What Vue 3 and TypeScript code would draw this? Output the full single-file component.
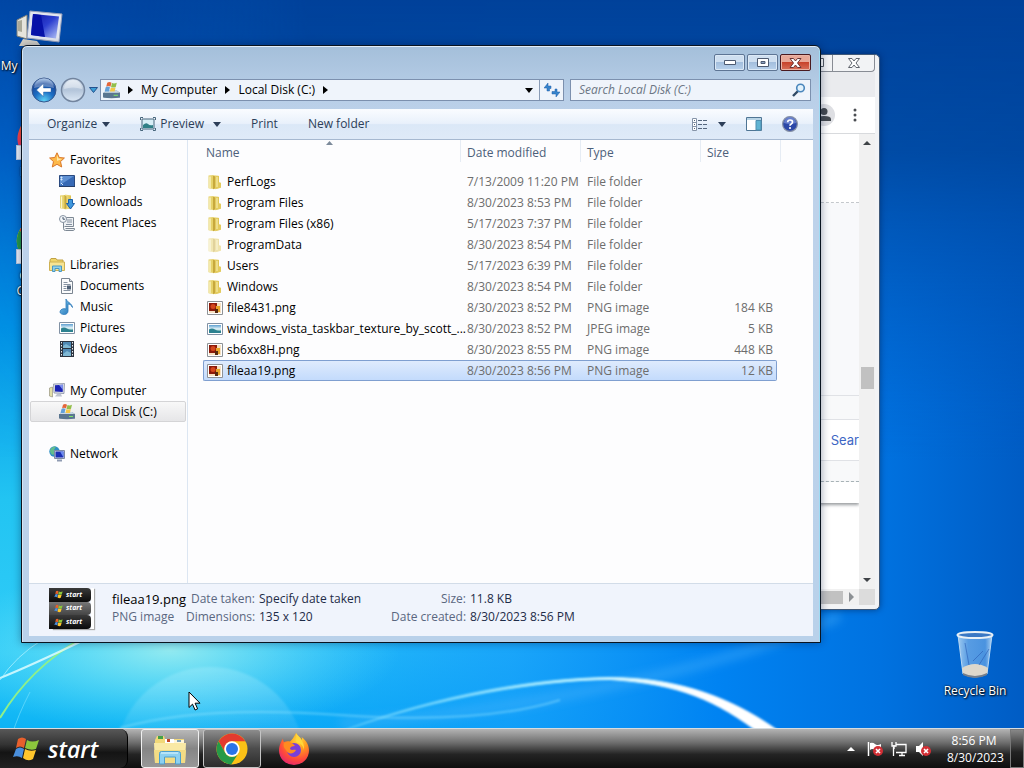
<script setup lang="ts">
import { ref } from 'vue'

interface NavItem {
  label: string
  icon: string
  child?: boolean
}
interface FileRow {
  name: string
  icon: string
  date: string
  type: string
  size: string
}

const groups: NavItem[][] = [
  [
    { label: 'Favorites', icon: 'star' },
    { label: 'Desktop', icon: 'desktop', child: true },
    { label: 'Downloads', icon: 'downloads', child: true },
    { label: 'Recent Places', icon: 'recent', child: true },
  ],
  [
    { label: 'Libraries', icon: 'libraries' },
    { label: 'Documents', icon: 'document', child: true },
    { label: 'Music', icon: 'music', child: true },
    { label: 'Pictures', icon: 'picture', child: true },
    { label: 'Videos', icon: 'video', child: true },
  ],
  [
    { label: 'My Computer', icon: 'computer' },
    { label: 'Local Disk (C:)', icon: 'disk', child: true },
  ],
  [{ label: 'Network', icon: 'network' }],
]

const files: FileRow[] = [
  { name: 'PerfLogs', icon: 'folder', date: '7/13/2009 11:20 PM', type: 'File folder', size: '' },
  { name: 'Program Files', icon: 'folder', date: '8/30/2023 8:53 PM', type: 'File folder', size: '' },
  { name: 'Program Files (x86)', icon: 'folder', date: '5/17/2023 7:37 PM', type: 'File folder', size: '' },
  { name: 'ProgramData', icon: 'folder', date: '8/30/2023 8:54 PM', type: 'File folder', size: '' },
  { name: 'Users', icon: 'folder', date: '5/17/2023 6:39 PM', type: 'File folder', size: '' },
  { name: 'Windows', icon: 'folder', date: '8/30/2023 8:54 PM', type: 'File folder', size: '' },
  { name: 'file8431.png', icon: 'png', date: '8/30/2023 8:52 PM', type: 'PNG image', size: '184 KB' },
  { name: 'windows_vista_taskbar_texture_by_scott_...', icon: 'picture', date: '8/30/2023 8:52 PM', type: 'JPEG image', size: '5 KB' },
  { name: 'sb6xx8H.png', icon: 'png', date: '8/30/2023 8:55 PM', type: 'PNG image', size: '448 KB' },
  { name: 'fileaa19.png', icon: 'png', date: '8/30/2023 8:56 PM', type: 'PNG image', size: '12 KB' },
]

const selectedNav = ref('Local Disk (C:)')
const selectedFile = ref('fileaa19.png')
const query = ref('')
</script>

<template>
  <svg class="defs" aria-hidden="true">
    <defs>
      <linearGradient id="gFolder" x1="0" x2="1"><stop offset="0" stop-color="#f4e590" /><stop offset="1" stop-color="#dcc04e" /></linearGradient>
      <linearGradient id="gScreen" x1="0" x2="1" y1="0" y2="1"><stop offset="0" stop-color="#0b12a0" /><stop offset=".5" stop-color="#2c3fd0" /><stop offset="1" stop-color="#b9c8f8" /></linearGradient>
      <linearGradient id="gSky" x1="0" x2="0" y1="0" y2="1"><stop offset="0" stop-color="#5d9fd0" /><stop offset=".5" stop-color="#e6f5fa" /><stop offset="1" stop-color="#2f8a80" /></linearGradient>
      <linearGradient id="gBlue" x1="0" x2="1" y1="0" y2="1"><stop offset="0" stop-color="#86cdf0" /><stop offset="1" stop-color="#1c6db4" /></linearGradient>
      <linearGradient id="gBin" x1="0" x2="1"><stop offset="0" stop-color="#c8e4f8" stop-opacity=".8" /><stop offset=".3" stop-color="#7db4ec" stop-opacity=".7" /><stop offset=".8" stop-color="#6aa8e8" stop-opacity=".7" /><stop offset="1" stop-color="#d0e8fa" stop-opacity=".85" /></linearGradient>
      <radialGradient id="gBack" cx=".5" cy=".95" r=".9"><stop offset="0" stop-color="#5fd3f6" /><stop offset=".45" stop-color="#1d6fc4" /><stop offset=".8" stop-color="#1a4a9c" /><stop offset="1" stop-color="#7fa6d8" /></radialGradient>
      <linearGradient id="gFwd" x1="0" x2="0" y1="0" y2="1"><stop offset="0" stop-color="#dfe8f2" /><stop offset=".5" stop-color="#b4c5da" /><stop offset="1" stop-color="#dce8f6" /></linearGradient>
      <radialGradient id="gFox" cx=".65" cy=".2" r=".9"><stop offset="0" stop-color="#ffe03c" /><stop offset=".35" stop-color="#ff9a1f" /><stop offset=".7" stop-color="#ff4a3a" /><stop offset="1" stop-color="#e0207a" /></radialGradient>

      <symbol id="flag" viewBox="0 0 28 26">
        <path d="M6 3q4-3 8 0l-2 9q-4-3-8 0z" fill="#e8602c" />
        <path d="M15 4q5 3 12 0l-3 9q-5 2-11-1z" fill="#8cc63c" />
        <path d="M4 13q4-3 8 0l-2 9q-4-3-9-1z" fill="#4a8fdc" />
        <path d="M13 13q5 3 11 1l-3 9q-5 3-10-1z" fill="#ffc62c" />
      </symbol>
      <symbol id="star" viewBox="0 0 16 16"><path d="M8 .8l2.200 4.700 5.200.5-3.900 3.600 1.200 5.400L8 12.300 3.300 15l1.200-5.400L.6 6l5.200-.5z" fill="#fdb94a" stroke="#d9772a" /><path d="M8 3l1.400 3.400L13 7 8 9z" fill="#ffe9a8" /></symbol>
      <symbol id="desktop" viewBox="0 0 16 16"><path d="M.5 2.500h15v11H.5z" fill="#3769b5" stroke="#2a4a80" /><path d="M1 3h14L1 12z" fill="#5f91d4" /><path d="M2 4h1v1H2zM2 6h1v1H2zM2 10l2 2" fill="#fff" stroke="#d5e8fa" /><path d="M0 13h16v1H0z" fill="#263e68" /></symbol>
      <symbol id="folder" viewBox="0 0 16 16"><path d="M1.500 1.500L6.500 1v14l-5-.8z" fill="#e6d26a" /><path d="M3 2.500v11.500" stroke="#fbf6cd" stroke-width="1.300" /><path d="M6.500 1L12 2v12l-5.500 1.200z" fill="url(#gFolder)" /><path d="M6 1.500v13.700l2.300-1V2.500z" fill="#c7a83c" /><path d="M8.300 2.500l3-.7V8l2.700.8v5L8.300 15.300z" fill="#e3cb5e" /><path d="M10 3v10" stroke="#f6ebaa" stroke-width="1.200" /></symbol>
      <symbol id="downloads" viewBox="0 0 16 16"><path d="M1 1.500L6 1v14l-5-.8z" fill="#e6d26a" /><path d="M2.500 2.500v11.500" stroke="#fbf6cd" stroke-width="1.300" /><path d="M6 .5l6 1v13l-6 1z" fill="url(#gFolder)" /><path d="M5.500 1v14.200l2-1V2.500z" fill="#c7a83c" /><path d="M9.500 5.500h4v4h2L11.500 15 7.500 9.500h2z" fill="#3f97dd" stroke="#1b5fa8" /></symbol>
      <symbol id="recent" viewBox="0 0 16 16"><path d="M5.500 2.500h9v9h-9M4.500 6v7.500q0 2 2 2h8q1 0 1-2h-9" fill="#eef1f4" stroke="#7d8894" /><path d="M8 5h5M8 7h5M7 9.500h6" stroke="#8490a0" /><circle cx="4" cy="4" r="3.500" fill="#f4f7fa" stroke="#8793a2" /><path d="M4 2v2.200h2" fill="none" stroke="#44566c" /></symbol>
      <symbol id="libraries" viewBox="0 0 16 16"><path d="M1 3l1-1.500h5l1 1.500h6v4H1z" fill="#efd56a" stroke="#c1a245" /><path d="M.5 5h15v8.500H.5z" fill="#f7e493" stroke="#ceb152" /><path d="M3.500 14.500V9h9v5.500h-2.500V11.500H6v3z" fill="#8fd0ec" stroke="#4a98c2" /></symbol>
      <symbol id="document" viewBox="0 0 16 16"><path d="M2.500.5h8l3 3v12h-11z" fill="#fbfcfd" stroke="#7b8591" /><path d="M10.500.5v3h3" fill="#d5dce4" stroke="#7b8591" /><path d="M4.500 4.500h4M4.500 6.500h7M4.500 8.500h3M4.500 10.500h3M4.500 12.500h7" stroke="#8793a2" /><path d="M8 7.500h4v4H8z" fill="#4e6076" /></symbol>
      <symbol id="music" viewBox="0 0 16 16"><path d="M7 0c.5 3 5.500 3.500 6.500 8.500-1-2.500-3-3.500-4.500-3.500V12c0 2-1.500 3.500-3.700 3.500S1 14.500 1 13s1.500-3.300 4-3.300c1 0 1.500.2 2 .4z" fill="url(#gBlue)" stroke="#2a79ba" stroke-width=".8" /></symbol>
      <symbol id="picture" viewBox="0 0 16 16"><path d="M.5 2.500h15v11H.5z" fill="#fff" stroke="#8191a4" /><path d="M2 4h12v8H2z" fill="url(#gSky)" /><path d="M2 8.500q3-2 6 0t6 1V12H2z" fill="#2d8290" /></symbol>
      <symbol id="video" viewBox="0 0 16 16"><path d="M1 0h14v16H1z" fill="#2c3440" /><path d="M4 1h8v6H4zM4 8h8v7H4z" fill="#4f89b4" /><path d="M4 5l3-2 5 3v1H4zM4 13l4-3 4 2v3H4z" fill="#7fb8d4" /><path d="M2.500 1v15M13.500 1v15" stroke="#e8eef4" stroke-dasharray="1.500 1.500" /></symbol>
      <symbol id="computer" viewBox="0 0 16 16"><path d="M.5 5l3-1v10l-3-1z" fill="#e4e0a8" stroke="#96937f" stroke-width=".7" /><path d="M4.500 1l11-.5-.5 10-10-.5z" fill="#dadde6" stroke="#8990a4" stroke-width=".8" /><path d="M6 2.200l8-.4-.3 7.100-7.700-.3z" fill="#1a22b4" /><path d="M10 2l4-.2-.2 5z" fill="#7f92ee" /><path d="M8 11h4l1 2.500H6z" fill="#bec3cf" /></symbol>
      <symbol id="disk" viewBox="0 0 16 16"><path d="M1 10l2-2h10l3 2v4.500H1z" fill="#7d96ac" /><path d="M0 10h16v4.500q-8 1.500-16 0z" fill="#5a7690" /><path d="M1 10l2-2h10l2.500 2z" fill="#c9d8e4" /><path d="M10 12h4v1h-4z" fill="#7ce26a" /><path d="M4 .8q2-1.500 4 0L7 4.500q-2-1.500-4 0z" fill="#e4663a" /><path d="M8.500 1q2 1 4.500-.3L12 4.700q-2 1-4.500.2z" fill="#93bf4a" /><path d="M2.500 5q2-1.500 4 0L5.500 9h-4z" fill="#63a0d8" /><path d="M7.300 5.300q2 1 4.500-.2L11 9H6.500z" fill="#f4c748" /></symbol>
      <symbol id="network" viewBox="0 0 16 16"><circle cx="5.500" cy="5.500" r="5.200" fill="#2f8fc4" /><path d="M1 4q2-4 6-3.500L5 4 7 6 4 9Q1 8 1 4z" fill="#63bd8c" /><path d="M5.500 4.500h10v8h-10z" fill="#d8deea" stroke="#7e8aa4" /><path d="M6.500 5.500h8v6h-8z" fill="#1c2fb4" /><path d="M11 5.500h3.500v6z" fill="#6d8cf0" /><path d="M8 14.500h5" stroke="#8f9bb2" stroke-width="2" /></symbol>
      <symbol id="png" viewBox="0 0 16 16"><path d="M.5 1.500h15v13H.5z" fill="#fff" stroke="#8e9296" /><path d="M2 3h12v10H2z" fill="#f6e0c0" /><path d="M2 3h8v8H2z" fill="#8c1a0a" /><circle cx="6" cy="6.500" r="2.500" fill="#d4471d" /><path d="M9 6h4v6H9z" fill="#e8a52a" /><path d="M8 9h3v4H8z" fill="#54280f" /></symbol>
      <symbol id="chrome" viewBox="0 0 32 32"><circle cx="16" cy="16" r="15.500" fill="#fbc116" /><path d="M2.600 8.300A15.500 15.500 0 0 1 29.400 8.300H16a7.700 7.700 0 0 0-6.700 11.600z" fill="#e33b2e" /><path d="M2.600 8.300A15.500 15.500 0 0 0 15.200 31.500L22.700 19.900a7.700 7.700 0 0 1-13.400 0z" fill="#269a48" /><circle cx="16" cy="16" r="7.700" fill="#fff" /><circle cx="16" cy="16" r="6" fill="#2a74e8" /></symbol>
      <symbol id="firefox" viewBox="0 0 32 32"><path d="M18 0c2 3 4 4 6 7 0-1 0-2-.4-3C29 8 31 13 31 17.500A15 14.500 0 0 1 1 17.500C1 12 4 7 5 5.500c0 2 .5 3 1 3.500C8 8 10 8 12 8.500 14 7 16 4 18 0z" fill="url(#gFox)" /><circle cx="16" cy="17" r="7" fill="#7a3fd8" /><path d="M6 10c4-2 8-1 11 3-3 0-5 1-5 3 2 2 4 0 6 1-2 4-8 5-10 0-2-2-3-4-2-7z" fill="#ff8b20" /><path d="M18 0c2 4 9 8 8 17-1-5-4-7-8-8 1-3 0-6 0-9z" fill="#ffd83a" /></symbol>
      <symbol id="explorer" viewBox="0 0 34 32"><path d="M2 7l2-4h7l1 3h19v20H2z" fill="#f1d878" /><path d="M5 3h5v3H5z" fill="#44a046" /><path d="M12 6h9v4h-9z" fill="#fff" /><path d="M14 6h3v3h-3z" fill="#c54724" /><path d="M21 7h10v4H21z" fill="#fff6d8" /><path d="M24 7h4v2h-4z" fill="#7aa0b8" /><path d="M1 10h32l-1 20H2z" fill="#f9e9a5" /><path d="M1 17h32l-1 13H2z" fill="#f3dc84" /><path d="M6.500 31V20.500q0-2 2-2h17q2 0 2 2V31h-5v-7h-11v7z" fill="#8dd0f0" stroke="#4b9fcf" /><path d="M8 20h17" stroke="#e2f7ff" /></symbol>
      <symbol id="badge" viewBox="0 0 10 10"><circle cx="5" cy="5" r="5" fill="#d22f35" /><path d="M3 3l4 4M7 3L3 7" stroke="#fff" stroke-width="1.600" /></symbol>
    </defs>
  </svg>

  <main class="screen">
    <svg class="wallpaper" viewBox="0 0 1024 768" preserveAspectRatio="none" aria-hidden="true">
      <defs>
        <linearGradient id="wBase" x1="0" y1="0" x2="0" y2="1"><stop offset="0" stop-color="#0048a8" /><stop offset=".2" stop-color="#0064cc" /><stop offset=".42" stop-color="#0094e8" /><stop offset=".65" stop-color="#22c4f2" /><stop offset=".85" stop-color="#30ccf8" /><stop offset=".96" stop-color="#08b0f4" /></linearGradient>
        <linearGradient id="wRight" x1="0" x2="1" y1="0" y2="0"><stop offset=".15" stop-color="#0090fa" stop-opacity="0" /><stop offset=".5" stop-color="#1298fa" stop-opacity=".75" /><stop offset=".7" stop-color="#0083f2" /><stop offset=".86" stop-color="#0072e0" /><stop offset="1" stop-color="#005cc4" /></linearGradient>
        <linearGradient id="wTop" x1="0" x2="0" y1="0" y2="1"><stop offset="0" stop-color="#00419a" /><stop offset=".2" stop-color="#00459c" stop-opacity=".85" /><stop offset=".6" stop-color="#005cc8" stop-opacity="0" /></linearGradient>
        <linearGradient id="wFade" x1="0" x2="1"><stop offset="0" stop-color="#333" /><stop offset=".3" stop-color="#fff" /></linearGradient>
        <mask id="wMask"><path d="M0 0h1024v768H0z" fill="url(#wFade)" /></mask>
        <radialGradient id="wGlow"><stop offset="0" stop-color="#98ecf0" stop-opacity=".95" /><stop offset="1" stop-color="#5adcf8" stop-opacity="0" /></radialGradient>
        <linearGradient id="wOrb" x1="0" x2="0" y1="0" y2="1"><stop offset="0" stop-color="#c8f6ff" stop-opacity=".24" /><stop offset=".5" stop-color="#fff" stop-opacity="0" /></linearGradient>
        <linearGradient id="wArc" x1="0" x2="1"><stop offset="0" stop-color="#7adcff" stop-opacity=".5" /><stop offset=".5" stop-color="#b4f0ff" /><stop offset=".8" stop-color="#fff" /></linearGradient>
        <filter id="soft"><feGaussianBlur stdDeviation="1" /></filter>
        <filter id="softer"><feGaussianBlur stdDeviation="5" /></filter>
      </defs>
      <path d="M0 0h1024v768H0z" fill="url(#wBase)" />
      <path d="M0 0h1024v768H0z" fill="url(#wRight)" />
      <path d="M0 0h1024v768H0z" fill="url(#wTop)" mask="url(#wMask)" />
      <ellipse cx="170" cy="650" rx="230" ry="85" fill="url(#wGlow)" />
      <circle cx="210" cy="762" r="95" fill="url(#wOrb)" filter="url(#soft)" />
      <path d="M340 724Q480 715 620 684T840 616" fill="none" stroke="#57b8fc" stroke-width="10" opacity=".35" filter="url(#softer)" />
      <path d="M120 728Q200 705 340 715T560 700" fill="none" stroke="#a4ecff" stroke-width="2" opacity=".4" filter="url(#soft)" />
      <path d="M345 730C440 694 540 678 610 677.500C680 678 734 698 784 735L762 735C716 700 680 684 610 679.500C540 680 440 697 345 730z" fill="url(#wArc)" stroke="url(#wArc)" stroke-width="1" filter="url(#soft)" />
      <path d="M0 718Q30 668 82 638" fill="none" stroke="#8ff08a" stroke-width="2" />
      <path d="M0 678Q30 666 84 640" fill="none" stroke="#e8ffff" stroke-width="2" opacity=".8" />
      <path d="M0 680Q16 656 42 640" fill="none" stroke="#b8f4ff" opacity=".7" />
      <path d="M12 735Q18 715 30 692" fill="none" stroke="#8eeaff" opacity=".5" />
    </svg>

    <section class="icons" aria-label="Desktop icons">
      <button class="desk pc">
        <svg viewBox="0 0 48 36" width="48" height="36"><path d="M2 10l10-5v24l-10-3z" fill="#e6e4dc" stroke="#7f8078" /><path d="M3 11l4-1v12l-4-1z" fill="#a9a898" /><path d="M15 1l32 3-3 28-32-4z" fill="#e2e6f0" stroke="#98a2bc" /><path d="M18 4l26 2.500-3 22-25-3.500z" fill="url(#gScreen)" /><path d="M18 4l8 1 4 22-14-2z" fill="#0612a8" /><path d="M8 29l14 2 4 5H4z" fill="#d5d2c8" /></svg>
        <span>My Computer</span>
      </button>
      <button class="desk">
        <svg width="46" height="46" viewBox="0 0 32 32"><use href="#firefox" /></svg>
        <i class="shortcut"></i>
        <span>Firefox</span>
      </button>
      <button class="desk">
        <svg width="46" height="46" viewBox="0 0 32 32"><use href="#chrome" /></svg>
        <i class="shortcut"></i>
        <span>Google<br />Chrome</span>
      </button>
    </section>

    <button class="desk bin">
      <svg width="40" height="48" viewBox="0 0 40 48"><path d="M3 4l5 39q12 6 24 0l5-39z" fill="url(#gBin)" stroke="#b8d8f4" /><path d="M7 37q13-8 26 0l-1 6q-12 6-24 0z" fill="#ddd8cc" /><path d="M8 42q12 6 24 0v2q-12 6-24 0z" fill="#737e8c" /><ellipse cx="20" cy="4" rx="17.500" ry="3" fill="#3a78c4" stroke="#e8f0f6" stroke-width="2" /><path d="M10 12l4 22M18 30l10-10M24 34l10-16" stroke="#2a5cb4" fill="none" opacity=".6" /></svg>
      <span>Recycle Bin</span>
    </button>

    <section class="browser" aria-label="Browser window">
      <div class="btitle">
        <button aria-label="Restore browser"><svg width="12" height="12" viewBox="0 0 12 12"><path d="M1.500 1.500h9v8h-9zM4.500 4.500h3v2h-3z" fill="#fff" stroke="#555b64" /></svg></button>
        <button class="bclose" aria-label="Close browser"><svg width="12" height="10" viewBox="0 0 12 10"><path d="M.5.500h3.500L6 3 8 .5h3.500L8 5l3.500 4.500H8L6 7 4 9.500H.5L4 5z" fill="#fff" stroke="#60656d" /></svg></button>
      </div>
      <div class="btabs"></div>
      <div class="btools">
        <span class="avatar"><svg width="22" height="22" viewBox="0 0 22 22"><circle cx="11" cy="11" r="11" fill="#dedfe3" /><circle cx="11" cy="7.500" r="3.500" fill="#454a50" /><path d="M4 17v-2q0-3 7-3t7 3v2z" fill="#454a50" /></svg></span>
        <button aria-label="Browser menu"><svg width="4" height="14" viewBox="0 0 4 14"><circle cx="2" cy="2" r="1.500" /><circle cx="2" cy="7" r="1.500" /><circle cx="2" cy="12" r="1.500" /></svg></button>
      </div>
      <div class="bbody">
        <div class="bpage">
          <div class="blank top"></div>
          <div class="blank panel"></div>
          <div class="blank strip"></div>
          <div class="linkrow"><a href="#search">Sear</a></div>
          <div class="blank strip2"></div>
          <div class="blank card"></div>
        </div>
        <div class="vscroll">
          <svg width="10" height="6" viewBox="0 0 10 6"><path d="M1 5h8L5 1z" fill="#3f4347" /></svg>
          <i></i>
          <svg width="10" height="6" viewBox="0 0 10 6"><path d="M1 1h8L5 5z" fill="#3f4347" /></svg>
        </div>
      </div>
      <div class="hscroll"><i></i><svg width="16" height="10" viewBox="0 0 16 10"><path d="M6 0v10l5-5z" fill="#8c9094" /></svg><b></b></div>
    </section>

    <section class="window" aria-label="Local Disk (C:)">
      <header class="title">
        <button aria-label="Minimize"><svg width="12" height="6" viewBox="0 0 12 6"><path d="M.5.500h11v4H.5z" fill="#fff" stroke="#4d5a70" /></svg></button>
        <button aria-label="Maximize"><svg width="12" height="10" viewBox="0 0 12 10"><path d="M.5.500h11v8H.5z" fill="#fff" stroke="#4d5a70" /><path d="M4 3.500h4v2H4z" fill="#8ba2c4" stroke="#4d5a70" /></svg></button>
        <button class="close" aria-label="Close"><svg width="13" height="10" viewBox="0 0 13 10"><path d="M1 .5h3.500l2 2.500 2-2.500H12L8.500 5 12 9.500H8.500l-2-2.500-2 2.500H1L4.500 5z" fill="#fff" stroke="#6a3535" /></svg></button>
      </header>

      <nav class="address">
        <div class="history">
          <button aria-label="Back"><svg width="26" height="26" viewBox="0 0 26 26"><circle cx="13" cy="13" r="12" fill="url(#gBack)" stroke="#36578e" /><path d="M3 11a10 10 0 0 1 20 0q-10-3-20 0z" fill="#fff" opacity=".3" /><path d="M5.500 13l7-6.500v4.500H20v4h-7.500v4.500z" fill="#fff" stroke="#24589c" stroke-width=".4" /></svg></button>
          <button aria-label="Forward"><svg width="26" height="26" viewBox="0 0 26 26"><circle cx="13" cy="13" r="11.500" fill="url(#gFwd)" stroke="#72849e" stroke-width="1.500" /><path d="M4 12a9 9 0 0 1 18 0q-9-3-18 0z" fill="#fff" opacity=".35" /></svg></button>
          <button class="recent" aria-label="Recent locations"><svg width="9" height="6" viewBox="0 0 9 6"><path d="M.5.500h8l-4 5z" fill="#3b9ed6" stroke="#24508c" /></svg></button>
        </div>
        <div class="crumbs">
          <svg width="17" height="17"><use href="#disk" /></svg>
          <svg class="tri" width="5" height="8" viewBox="0 0 5 8"><path d="M0 0v8l5-4z" /></svg>
          <a href="#computer">My Computer</a>
          <svg class="tri" width="5" height="8" viewBox="0 0 5 8"><path d="M0 0v8l5-4z" /></svg>
          <a href="#disk-c">Local Disk (C:)</a>
          <svg class="tri" width="5" height="8" viewBox="0 0 5 8"><path d="M0 0v8l5-4z" /></svg>
          <button class="drop" aria-label="Previous locations"><svg width="8" height="5" viewBox="0 0 8 5"><path d="M0 0h8L4 5z" /></svg></button>
          <button class="refresh" aria-label="Refresh"><svg width="16" height="14" viewBox="0 0 16 14"><path d="M0 5l4-5v3h3v2.500H5.500V8H3V5z" fill="#3684cc" stroke="#1e5fa8" stroke-width=".5" /><path d="M16 9l-4 5v-3H8V8.500h3V6h2v3z" fill="#3684cc" stroke="#1e5fa8" stroke-width=".5" /></svg></button>
        </div>
        <div class="search">
          <input v-model="query" type="text" aria-label="Search Local Disk (C:)" placeholder="Search Local Disk (C:)" />
          <svg width="14" height="14" viewBox="0 0 14 14"><path d="M1 13l5-5" stroke="#2f4864" stroke-width="2.400" /><circle cx="8.500" cy="5" r="3.800" fill="#e2f2fc" stroke="#4a86bc" stroke-width="1.600" /></svg>
        </div>
      </nav>

      <div class="client">
        <div class="toolbar">
          <button>Organize <svg width="8" height="5" viewBox="0 0 8 5"><path d="M0 0h8L4 5z" /></svg></button>
          <button class="preview"><svg width="16" height="14" viewBox="0 0 16 14"><path d="M2 2h12v10H2z" fill="#d8eef6" stroke="#49677c" /><path d="M3 8q3-3 5-1t5 1v3H3z" fill="#2f7f86" /><path d="M.5 3V.5H3M13 .5h2.500V3M15.500 11v2.500H13M3 13.500H.5V11" fill="none" stroke="#49677c" /></svg>Preview <svg class="far" width="8" height="5" viewBox="0 0 8 5"><path d="M0 0h8L4 5z" /></svg></button>
          <button>Print</button>
          <button>New folder</button>
          <span class="grow"></span>
          <button class="views" aria-label="Change your view"><svg width="16" height="13" viewBox="0 0 16 13"><path d="M.5.500h4v12h-4zM.5 4.500h4M.5 8.500h4" fill="#fff" stroke="#8694a8" /><path d="M6 2.500h4M11 2.500h4M6 6.500h4M11 6.500h4M6 10.500h4M11 10.500h4" stroke="#54657c" /><path d="M2 2h1v1H2zM2 6h1v1H2zM2 10h1v1H2z" fill="#54657c" /></svg><svg width="8" height="5" viewBox="0 0 8 5"><path d="M0 0h8L4 5z" /></svg></button>
          <button class="pane" aria-label="Show the preview pane"><svg width="16" height="14" viewBox="0 0 16 14"><path d="M.5.500h15v13H.5z" fill="#fff" stroke="#4f7594" /><path d="M1 1h14v2H1z" fill="#b8d4e6" /><path d="M10 3.500h5V13h-5z" fill="#62b4d2" stroke="#4f8fb0" /></svg></button>
          <button class="help" aria-label="Help"><svg width="16" height="16" viewBox="0 0 16 16"><circle cx="8" cy="8" r="7.400" fill="#2c48a8" stroke="#8791a6" stroke-width="1.200" /><path d="M2 7a6 6 0 0 1 12 0q-6 2-12 0z" fill="#8ea4e4" opacity=".6" /><path d="M5.700 6.300q0-2.300 2.400-2.300t2.400 2q0 1.200-1.300 1.900Q8 8.500 8 9.700" fill="none" stroke="#fff" stroke-width="1.700" /><circle cx="8" cy="12" r="1.100" fill="#fff" /></svg></button>
        </div>

        <div class="panes">
          <aside class="side">
            <ul v-for="(group, i) in groups" :key="i">
              <li v-for="item in group" :key="item.label">
                <button :class="{ child: item.child, active: item.label === selectedNav }" @click="selectedNav = item.label">
                  <svg width="16" height="16"><use :href="'#' + item.icon" /></svg>{{ item.label }}
                </button>
              </li>
            </ul>
          </aside>
          <div class="list">
            <table>
              <colgroup><col class="cname" /><col class="cdate" /><col class="ctype" /><col class="csize" /></colgroup>
              <thead>
                <tr>
                  <th scope="col">Name<svg class="sort" width="7" height="4" viewBox="0 0 7 4"><path d="M0 4h7L3.500 0z" fill="#7c8a9a" /></svg></th>
                  <th scope="col">Date modified</th>
                  <th scope="col">Type</th>
                  <th scope="col">Size</th>
                </tr>
              </thead>
              <tbody>
                <tr v-for="f in files" :key="f.name" :class="{ selected: f.name === selectedFile }" @click="selectedFile = f.name">
                  <td><span class="file" :class="{ faded: f.name === 'ProgramData' }"><svg width="16" height="16"><use :href="'#' + f.icon" /></svg>{{ f.name }}</span></td>
                  <td>{{ f.date }}</td>
                  <td>{{ f.type }}</td>
                  <td>{{ f.size }}</td>
                </tr>
              </tbody>
            </table>
          </div>
        </div>

        <footer class="details">
          <div class="thumb">
            <span v-for="n in 3" :key="n" :class="{ mid: n === 2 }"><svg width="9" height="9"><use href="#flag" /></svg>start</span>
          </div>
          <div class="what"><strong>fileaa19.png</strong><span>PNG image</span></div>
          <dl class="first">
            <dt>Date taken:</dt><dd>Specify date taken</dd>
            <dt>Dimensions:</dt><dd>135 x 120</dd>
          </dl>
          <dl>
            <dt>Size:</dt><dd>11.8 KB</dd>
            <dt>Date created:</dt><dd>8/30/2023 8:56 PM</dd>
          </dl>
        </footer>
      </div>
    </section>

    <footer class="taskbar">
      <button class="start"><svg width="28" height="26"><use href="#flag" /></svg>start</button>
      <button class="task open current" aria-label="Windows Explorer"><svg width="34" height="32"><use href="#explorer" /></svg></button>
      <button class="task open" aria-label="Google Chrome"><svg width="32" height="32"><use href="#chrome" /></svg></button>
      <button class="task" aria-label="Firefox"><svg width="32" height="32"><use href="#firefox" /></svg></button>
      <div class="tray">
        <button aria-label="Show hidden icons"><svg width="8" height="4" viewBox="0 0 8 4"><path d="M0 4h8L4 0z" fill="#fff" /></svg></button>
        <button aria-label="Action Center"><svg width="16" height="16" viewBox="0 0 16 16"><path d="M1.500 1v14" stroke="#fff" stroke-width="1.500" /><path d="M3 2q3-1 5 1t6 0v6q-3 2-6 0t-5 0z" fill="#fff" /><use href="#badge" x="6" y="5" width="10" height="10" /></svg></button>
        <button aria-label="Network"><svg width="16" height="16" viewBox="0 0 16 16"><path d="M5 3.500h10v8H5M8 14.500h6M11 12v2M2.500 6v9" fill="none" stroke="#fff" stroke-width="1.300" /><path d="M1 1v4h4V1M3 4v4" fill="none" stroke="#fff" stroke-width="1.300" /></svg></button>
        <button aria-label="Volume muted"><svg width="16" height="16" viewBox="0 0 16 16"><path d="M1 5h3l4-4v14l-4-4H1z" fill="#fff" /><use href="#badge" x="6" y="5" width="10" height="10" /></svg></button>
      </div>
      <time class="clock"><span>8:56 PM</span><span>8/30/2023</span></time>
      <button class="peek" aria-label="Show desktop"></button>
    </footer>

    <svg class="pointer" width="14" height="20" viewBox="0 0 14 20" aria-hidden="true"><path d="M1 1v15.500l3.500-3.300 2.600 5.800 2.500-1.200L7.100 12.200H12z" fill="#fff" stroke="#000" /></svg>
  </main>
</template>

<style>
html,
body,
#app {
  height: 100%;
}
body {
  margin: 0;
  overflow: hidden;
}
</style>

<style scoped>
.defs {
  position: absolute;
  width: 0;
  height: 0;
}
.screen {
  position: relative;
  height: 100%;
  overflow: hidden;
  font-family: 'Open Sans', 'Noto Sans', sans-serif;
  font-size: 12px;
  line-height: 18px;
  color: #000;
  display: flex;
  flex-direction: column;
  justify-content: space-between;
}
.screen * {
  box-sizing: border-box;
}
svg {
  display: block;
  flex: none;
}
button {
  font: inherit;
  color: inherit;
  background: none;
  border: 0;
  padding: 0;
  margin: 0;
}
a {
  color: inherit;
  text-decoration: none;
}
.wallpaper {
  position: absolute;
  inset: 0;
  width: 100%;
  height: 100%;
}

/* desktop icons */
.icons {
  position: relative;
  display: flex;
  flex-direction: column;
  width: 78px;
  padding-top: 10px;
}
.desk {
  position: relative;
  display: flex;
  flex-direction: column;
  align-items: center;
  gap: 4px;
  height: 104px;
  color: #fff;
  line-height: 15px;
  white-space: nowrap;
  text-shadow: 1px 1px 2px #000, 0 0 2px #000;
}
.desk.pc {
  gap: 12px;
}
.shortcut {
  position: absolute;
  left: 16px;
  top: 31px;
  width: 15px;
  height: 15px;
  background: #e8eef8;
  border: 1px solid #b4c4dc;
}
.desk.bin {
  position: absolute;
  right: 11px;
  bottom: 62px;
  width: 76px;
  height: 75px;
}

/* browser window behind */
.browser {
  position: absolute;
  top: 54px;
  right: 144px;
  bottom: 158px;
  left: 600px;
  display: flex;
  flex-direction: column;
  padding: 0 4px 4px;
  background: #f2f3f5;
  border: 1px solid #3e5878;
  border-radius: 5px;
  box-shadow: 0 0 6px rgb(0 20 60 / 50%);
}
.btitle {
  display: flex;
  justify-content: flex-end;
  height: 17px;
}
.btitle button {
  display: grid;
  place-items: center;
  width: 29px;
  border: 1px solid #888c94;
  border-top: 0;
}
.btitle .bclose {
  width: 42px;
  border-left: 0;
  border-radius: 0 0 4px 0;
}
.btabs {
  height: 25px;
  background: #eaebee;
}
.btools {
  display: flex;
  align-items: center;
  justify-content: flex-end;
  gap: 18px;
  height: 37px;
  padding-right: 18px;
  background: #fff;
  border-bottom: 1px solid #d8dadd;
}
.btools button {
  fill: #4a4d52;
}
.bbody {
  flex: 1;
  display: flex;
  min-height: 0;
}
.bpage {
  flex: 1;
  display: flex;
  flex-direction: column;
  background: #fff;
  overflow: hidden;
}
.top {
  height: 69px;
  border-bottom: 1px dashed #c4c8cc;
}
.panel {
  flex: 1;
  background: #f8f9fb;
  border-bottom: 1px solid #e0e2e6;
}
.strip {
  height: 24px;
  background: #f8f9fa;
  border-bottom: 1px solid #e0e2e6;
}
.linkrow {
  display: flex;
  align-items: center;
  justify-content: flex-end;
  height: 41px;
  border-bottom: 1px solid #e0e2e6;
  font-family: Inter, sans-serif;
  font-size: 13px;
  color: #3d66c4;
}
.strip2 {
  height: 21px;
  background: #f8f9fa;
  border-bottom: 1px dashed #a8b4b8;
}
.card {
  height: 21px;
  margin-bottom: 86px;
  box-shadow: 0 2px 3px #9a9da0;
}
.vscroll {
  width: 16px;
  display: flex;
  flex-direction: column;
  align-items: center;
  justify-content: space-between;
  padding: 6px 0;
  background: #f1f1f1;
}
.vscroll i {
  width: 13px;
  height: 22px;
  margin-top: 32px;
  background: #c1c1c1;
}
.hscroll {
  display: flex;
  align-items: center;
  height: 16px;
  background: #f1f1f1;
}
.hscroll i {
  flex: 1;
  height: 13px;
  background: #c1c1c1;
}
.hscroll b {
  width: 16px;
  height: 16px;
  background: #dcdcdc;
}

/* explorer window */
.window {
  position: absolute;
  inset: 45px 203px 125px 21px;
  display: flex;
  flex-direction: column;
  padding: 0 7px 6px;
  background: linear-gradient(to bottom, #a4bfda 0, #b9cfe8 50px, #bed2ea 90px, #b9d1ea 100%);
  border: 1px solid #0a1420;
  border-radius: 6px 6px 0 0;
  box-shadow: inset 0 1px #e4eef8, inset 1px 0 #d6e6f4, inset -1px 0 #9fdcf4, 0 0 8px rgb(0 20 60 / 40%);
}
.title {
  display: flex;
  justify-content: flex-end;
  gap: 2px;
  padding: 8px 2px 0;
  height: 30px;
}
.title button {
  display: grid;
  place-items: center;
  width: 31px;
  height: 17px;
  border: 1px solid #5e7594;
  border-radius: 2px;
  background: linear-gradient(#cfdff0 0 45%, #a3bedd 50%, #b9d2ec);
  box-shadow: inset 0 0 0 1px #dce9f6;
}
.title .close {
  border-color: #4a1a20;
  background: linear-gradient(#e8a898 0 45%, #c8432c 50%, #d8705a);
  box-shadow: inset 0 0 0 1px #eab4a6;
}
.address {
  display: flex;
  align-items: center;
  height: 28px;
  padding-right: 2px;
  gap: 6px;
}
.history {
  display: flex;
  align-items: center;
  gap: 3px;
  width: 65px;
  padding-left: 2px;
}
.crumbs {
  flex: 1;
  display: flex;
  align-items: center;
  height: 22px;
  padding-left: 2px;
  background: #eff4fb;
  border: 1px solid #7c90ae;
}
.crumbs .tri {
  margin: 0 8px;
}
.drop {
  margin-left: auto;
  padding: 8px 6px;
}
.refresh {
  display: grid;
  place-items: center;
  width: 24px;
  height: 20px;
  border-left: 1px solid #8a9cb6;
}
.search {
  display: flex;
  align-items: center;
  width: 241px;
  height: 22px;
  padding: 0 4px 0 8px;
  background: #eff4fb;
  border: 1px solid #7c90ae;
}
.search input {
  flex: 1;
  min-width: 0;
  padding: 0;
  border: 0;
  background: none;
  font: inherit;
  font-style: italic;
}
.search input::placeholder {
  color: #6c7684;
  opacity: 1;
}
.client {
  flex: 1;
  display: flex;
  flex-direction: column;
  min-height: 0;
  margin-top: 5px;
  background: #fdfdfe;
}
.toolbar {
  display: flex;
  align-items: center;
  height: 31px;
  padding: 0 15px 0 18px;
  gap: 30px;
  color: #2c3e58;
  fill: #2c3e58;
  background: linear-gradient(#fafcff, #e9f1fb 48%, #dbe8f7 52%, #dfeaf8);
  border-bottom: 1px solid #a6b8d0;
}
.toolbar button {
  display: flex;
  align-items: center;
  gap: 5px;
}
.toolbar .preview {
  gap: 4px;
}
.preview .far {
  margin-left: 5px;
}
.grow {
  flex: 1;
}
.toolbar .views {
  gap: 10px;
}
.toolbar .pane,
.toolbar .help {
  margin-left: -10px;
}
.panes {
  flex: 1;
  display: flex;
  min-height: 0;
}
.side {
  width: 159px;
  padding: 9px 1px 0;
  border-right: 1px solid #dce6f2;
}
ul {
  list-style: none;
  margin: 0 0 21px;
  padding: 0;
}
.side button {
  display: flex;
  align-items: center;
  gap: 5px;
  width: 100%;
  height: 21px;
  padding-left: 18px;
  border: 1px solid transparent;
  border-radius: 2px;
}
.side .child {
  padding-left: 28px;
}
.side .active {
  border-color: #d4d4d6;
  background: linear-gradient(#f8f8f8, #e6e6e8);
}
.list {
  flex: 1;
  padding-left: 15px;
}
table {
  width: 574px;
  table-layout: fixed;
  border-collapse: separate;
  border-spacing: 0;
}
.cname {
  width: 258px;
}
.cdate,
.ctype {
  width: 120px;
}
th {
  position: relative;
  height: 26px;
  padding: 0 0 0 6px;
  font-weight: 400;
  text-align: left;
  color: #4c607a;
}
th:first-child {
  padding-left: 3px;
}
th::after {
  content: '';
  position: absolute;
  top: 0;
  right: 0;
  width: 1px;
  height: 22px;
  background: #e6ecf4;
}
th:last-child::after {
  right: -4px;
}
.sort {
  position: absolute;
  left: 123px;
  top: 1px;
}
thead::after {
  content: '';
  display: block;
  height: 5px;
}
td {
  height: 21px;
  padding: 0 6px;
  line-height: 19px;
  border: 1px solid transparent;
  border-width: 1px 0;
  color: #6d6d6d;
  white-space: nowrap;
}
td:first-child {
  padding: 0 3px;
  border-left-width: 1px;
  color: #000;
}
td:last-child {
  padding: 0 3px;
  text-align: right;
  border-right-width: 1px;
}
.file {
  display: flex;
  align-items: center;
  gap: 4px;
}
.faded svg {
  opacity: 0.5;
}
.selected td {
  border-color: #7f9fd0;
  background: linear-gradient(#dfebfd, #c3dbfc);
}
.selected td:first-child {
  border-radius: 2px 0 0 2px;
}
.selected td:last-child {
  border-radius: 0 2px 2px 0;
}
.details {
  display: flex;
  height: 53px;
  padding: 4px 0 0 20px;
  line-height: 18px;
  background: #f0f4fc;
  border-top: 1px solid #d2dce8;
  color: #1e2c48;
}
.thumb {
  display: grid;
  width: 42px;
  height: 41px;
  margin-right: 21px;
  box-shadow: 3px 0 #fff, 4px 1px 1px #aaa;
}
.thumb span {
  display: flex;
  align-items: center;
  gap: 3px;
  padding-left: 5px;
  font-size: 7px;
  font-weight: 700;
  font-style: italic;
  line-height: 8px;
  color: #fff;
  background: linear-gradient(#3a3a3a, #0a0a0a);
  border-radius: 0 4px 4px 0;
}
.thumb .mid {
  background: linear-gradient(#777, #444);
}
.what {
  display: flex;
  flex-direction: column;
  width: 74px;
  padding-top: 2px;
  color: #5a6780;
  white-space: nowrap;
}
.what strong {
  font-size: 13px;
  font-weight: 400;
  color: #000;
}
dl {
  display: grid;
  grid-template-columns: 75px auto;
  grid-auto-rows: 18px;
  column-gap: 4px;
  margin: 0;
  padding-top: 2px;
  white-space: nowrap;
}
dl.first {
  grid-template-columns: 69px 132px;
}
dt {
  text-align: right;
  color: #5a6780;
}
dd {
  margin: 0;
}

/* taskbar */
.taskbar {
  position: relative;
  display: flex;
  align-items: stretch;
  height: 40px;
  color: #fff;
  background: linear-gradient(#b4b4b4, #6e6e6e 35%, #242424 65%, #0e0e0e);
  border-top: 1px solid #d6dce0;
}
.start {
  display: flex;
  align-items: center;
  gap: 8px;
  width: 128px;
  margin-right: 13px;
  padding-left: 12px;
  font-size: 23px;
  font-weight: 600;
  font-style: italic;
  background: linear-gradient(#585858, #333 40%, #141414 60%, #222);
  border-right: 1px solid #000;
  border-radius: 0 8px 8px 0;
}
.task {
  display: grid;
  place-items: center;
  width: 58px;
  margin-right: 4px;
  border-radius: 3px;
}
.open {
  border: 1px solid #c4c4c4;
  background: linear-gradient(#8c8c8c, #4c4c4c 50%, #2c2c2c);
}
.current {
  border-color: #f0f0f0;
  background: linear-gradient(#b8b8b8, #858585 50%, #989898);
}
.tray {
  display: flex;
  align-items: center;
  gap: 8px;
  margin-left: auto;
  margin-right: 16px;
}
.tray button:first-child {
  margin-right: 4px;
}
.clock {
  display: flex;
  flex-direction: column;
  justify-content: center;
  width: 54px;
  margin-right: 9px;
  padding-top: 1px;
  font-size: 12px;
  line-height: 17px;
  text-align: center;
  white-space: nowrap;
}
.peek {
  width: 14px;
  border: 1px solid #777;
  background: linear-gradient(#888, #222 60%, #111);
}
.pointer {
  position: absolute;
  left: 188px;
  top: 691px;
}
</style>
